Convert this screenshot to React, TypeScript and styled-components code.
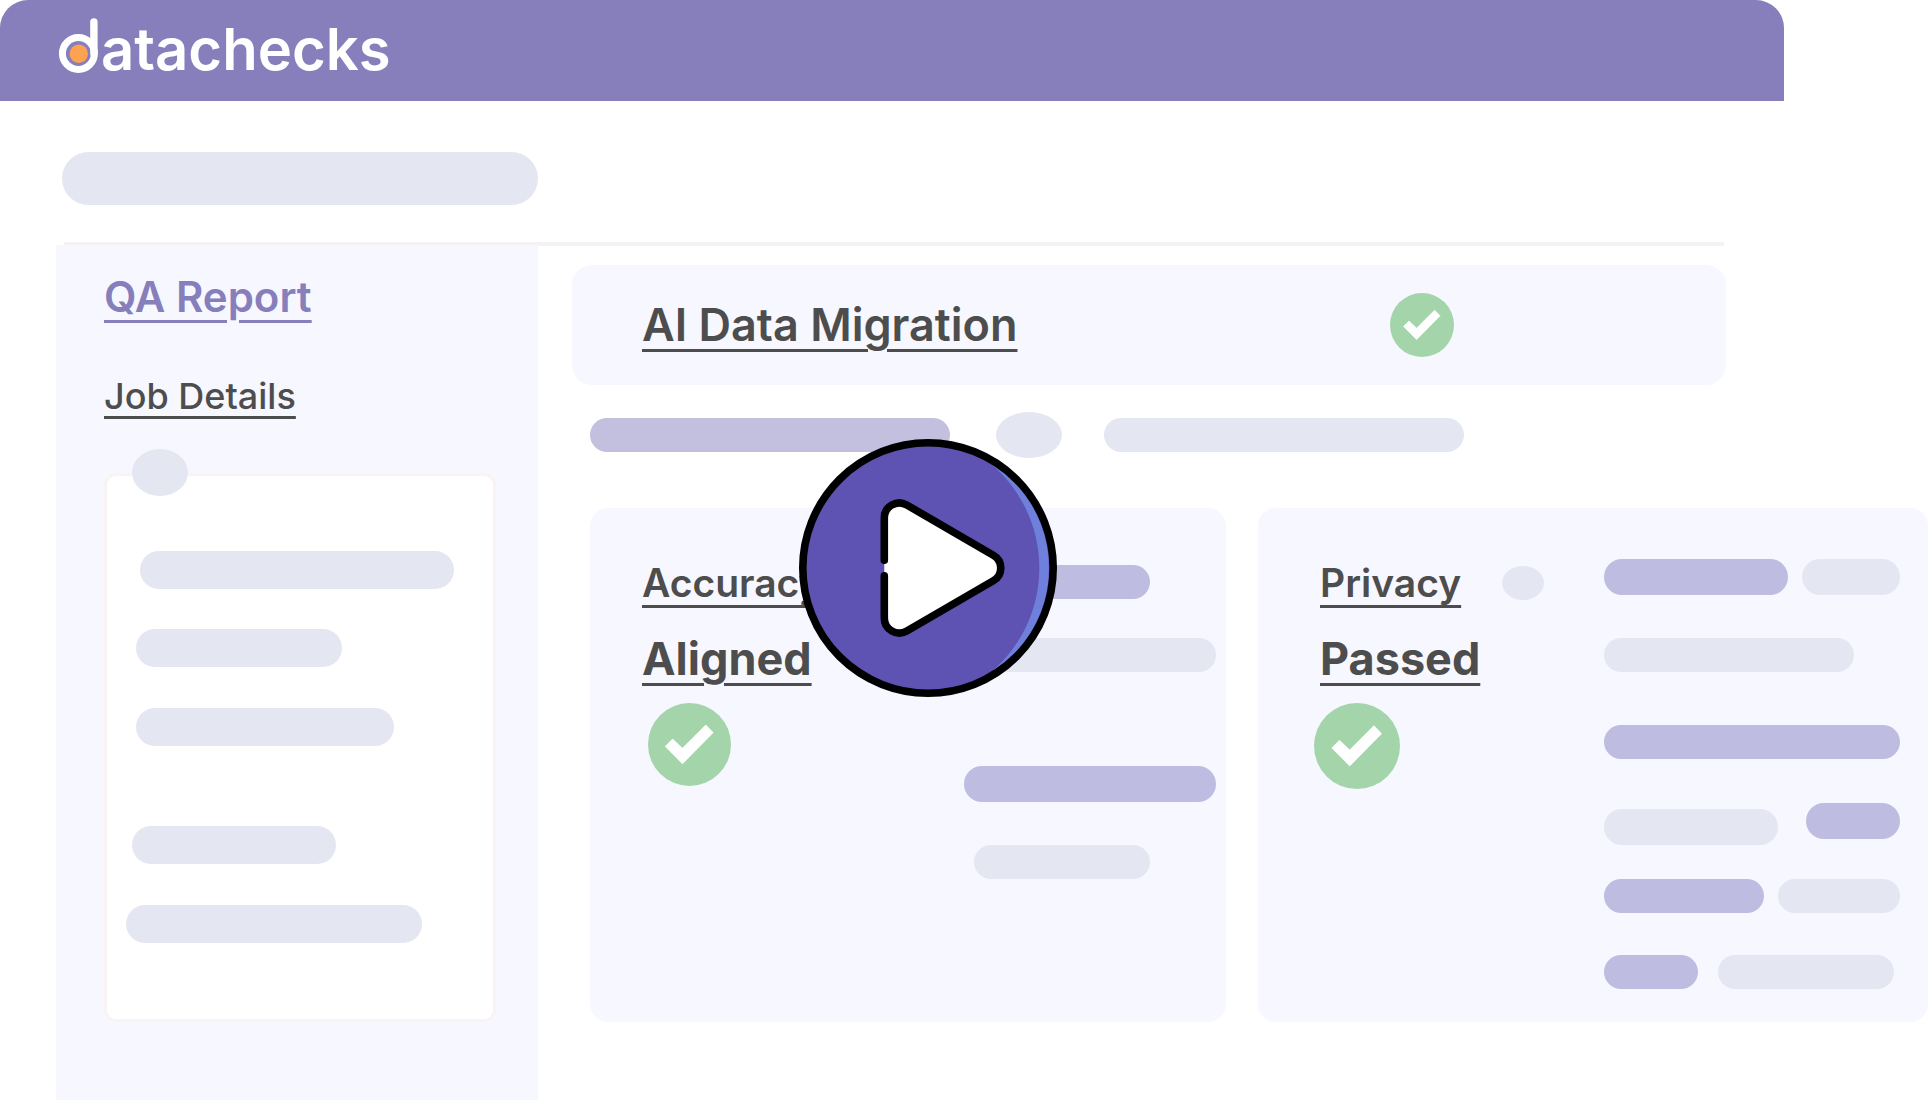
import React from "react";
import styled, { createGlobalStyle } from "styled-components";

const color = {
  brand: "#867fbc",
  ink: "#4d4d4d",
  panel: "#f7f7ff",
  mist: "#e4e6f1",
  lilac: "#bebce0",
  lavender: "#c3bfdf",
  line: "#f5f2f2",
  cardLine: "#f9f4f3",
  success: "#a4d5aa",
};

const GlobalStyle = createGlobalStyle`
  *, *::before, *::after { box-sizing: border-box; }
  html, body { margin: 0; padding: 0; background: #ffffff; }
  body { font-family: Inter, "Liberation Sans", sans-serif; color: ${color.ink}; }
  h1, h2, h3, p { margin: 0; }
`;

const Page = styled.div`
  min-height: 100vh;
  display: flex;
  flex-direction: column;
  padding-bottom: 2px;
`;

const TopBar = styled.header`
  display: flex;
  align-items: flex-start;
  height: 101px;
  margin-right: 144px;
  padding: 12px 58px;
  background: ${color.brand};
  border-radius: 28px 28px 0 0;
`;

const Brand = styled.a`
  display: flex;
  align-items: flex-start;
  gap: 2px;
  color: #ffffff;
  text-decoration: none;
`;

const BrandName = styled.span`
  font-size: 58px;
  font-weight: 600;
  line-height: 74px;
`;

const Toolbar = styled.div`
  margin: 0 204px 0 64px;
  padding: 51px 0 37px;
  border-bottom: 4px solid ${color.line};
`;

const SearchBar = styled.div`
  width: 476px;
  height: 53px;
  margin-left: -2px;
  border-radius: 27px;
  background: ${color.mist};
`;

const Body = styled.div`
  flex: 1;
  display: grid;
  grid-template-columns: 482px minmax(0, 1fr);
  column-gap: 34px;
  margin-top: -1px;
  padding-left: 56px;
`;

const Sidebar = styled.aside`
  display: flex;
  flex-direction: column;
  align-items: flex-start;
  padding: 26px 42px 60px 48px;
  background: ${color.panel};
`;

const SideLink = styled.a<{ $active?: boolean }>`
  color: ${(p) => (p.$active ? color.brand : color.ink)};
  font-size: ${(p) => (p.$active ? 42 : 36)}px;
  font-weight: ${(p) => (p.$active ? 600 : 500)};
  line-height: ${(p) => (p.$active ? 52 : 44)}px;
  text-decoration: underline;
  text-decoration-thickness: 3px;
  text-underline-offset: ${(p) => (p.$active ? 8 : 7)}px;
  & + & {
    margin-top: 51px;
  }
`;

const DetailsBox = styled.section`
  position: relative;
  align-self: stretch;
  margin-top: 55px;
  padding: 75px 19px 76px;
  border: 3px solid ${color.cardLine};
  border-radius: 12px;
  background: #ffffff;
`;

const Dot = styled.span<{ $w: number; $h: number }>`
  flex: none;
  width: ${(p) => p.$w}px;
  height: ${(p) => p.$h}px;
  border-radius: 50%;
  background: ${color.mist};
`;

const CornerDot = styled(Dot)`
  position: absolute;
  top: -27px;
  left: 25px;
`;

type BarProps = { $w: number; $h?: number; $tone?: string; $indent?: number; $top?: number };

const Bar = styled.div<BarProps>`
  flex: none;
  width: ${(p) => p.$w}px;
  height: ${(p) => p.$h ?? 34}px;
  margin-left: ${(p) => p.$indent ?? 0}px;
  margin-top: ${(p) => p.$top ?? 0}px;
  border-radius: 19px;
  background: ${(p) => p.$tone ?? color.mist};
`;

const Main = styled.main`
  padding-top: 20px;
`;

const TitleCard = styled.section`
  display: flex;
  align-items: center;
  justify-content: space-between;
  height: 120px;
  margin-right: 202px;
  padding: 0 272px 0 70px;
  border-radius: 20px;
  background: ${color.panel};
`;

const Heading = styled.h2<{ $size: number; $weight?: number }>`
  font-size: ${(p) => p.$size}px;
  font-weight: ${(p) => p.$weight ?? 600};
  line-height: ${(p) => (p.$size > 40 ? 56 : 48)}px;
  text-decoration: underline;
  text-decoration-thickness: 3px;
  text-underline-offset: 8px;
  white-space: nowrap;
`;

const Filters = styled.div`
  display: flex;
  align-items: center;
  height: 48px;
  margin: 26px 0 0 18px;
`;

const FilterDot = styled(Dot)`
  margin: 0 42px 0 46px;
`;

const Cards = styled.div`
  display: grid;
  grid-template-columns: minmax(0, 636fr) minmax(0, 670fr);
  column-gap: 32px;
  margin: 49px 0 60px 18px;
`;

const Card = styled.section<{ $left: number; $right: number }>`
  position: relative;
  display: flex;
  justify-content: space-between;
  min-height: 514px;
  padding: 51px ${(p) => p.$right}px 24px ${(p) => p.$left}px;
  border-radius: 18px;
  background: ${color.panel};
`;

const Summary = styled.div<{ $shift: number }>`
  display: flex;
  flex-direction: column;
  align-items: flex-start;
  row-gap: 24px;
  padding-left: ${(p) => p.$shift}px;
`;

const SummaryRow = styled.div`
  display: flex;
  align-items: center;
  column-gap: 41px;
`;

const Status = styled.div<{ $indent: number }>`
  display: flex;
  flex-direction: column;
  align-items: flex-start;
  row-gap: 16px;
  svg {
    margin-left: ${(p) => p.$indent}px;
  }
`;

const Bars = styled.div<{ $w: number; $top?: number }>`
  flex: none;
  width: ${(p) => p.$w}px;
  padding-top: ${(p) => p.$top ?? 0}px;
`;

const BarRow = styled.div<{ $gap?: number; $top?: number }>`
  display: flex;
  align-items: flex-start;
  column-gap: ${(p) => p.$gap ?? 14}px;
  margin-top: ${(p) => p.$top ?? 0}px;
`;

const PlayButton = styled.button`
  position: absolute;
  top: -69px;
  left: 209px;
  width: 258px;
  height: 258px;
  padding: 0;
  border: 0;
  border-radius: 50%;
  background: transparent;
  cursor: pointer;
  svg {
    display: block;
  }
`;

const LogoMark = () => (
  <svg width="41" height="64" viewBox="58 12 41 64" aria-hidden="true">
    <circle cx="78.4" cy="53.5" r="16" fill="none" stroke="#fff" strokeWidth="7" />
    <path d="M93.9 22v31.5" stroke="#fff" strokeWidth="7.4" strokeLinecap="round" />
    <circle cx="78.8" cy="53.8" r="9.2" fill="#fca251" />
  </svg>
);

const Check = ({ size }: { size: number }) => (
  <svg width={size} height={size} viewBox="0 0 64 64" role="img" aria-label="Passed">
    <circle cx="32" cy="32" r="32" fill={color.success} />
    <path
      d="M13.6 33.4 19 28l7.6 7.2 18-18 5.4 5.6-23.4 23.8z"
      fill="#fff"
      stroke="#fff"
      strokeWidth="0.8"
      strokeLinejoin="round"
    />
  </svg>
);

const PlayIcon = () => (
  <svg width="258" height="258" viewBox="0 0 258 258" aria-hidden="true">
    <circle cx="129" cy="129" r="125" fill="#5e52b2" />
    <path d="M186 20A125 125 0 0 1 186 238A136.5 136.5 0 0 0 186 20z" fill="#6f80dc" />
    <circle cx="129" cy="129" r="125.2" fill="none" stroke="#000" strokeWidth="7.6" />
    <path
      d="M85.3 79a15 15 0 0 1 22.5-13L194.3 116.2a14.7 14.7 0 0 1 0 25.6L107.8 192a15 15 0 0 1-22.5-13z"
      fill="#fff"
    />
    <path
      d="M85.3 121.2V79a15 15 0 0 1 22.5-13L194.3 116.2a14.7 14.7 0 0 1 0 25.6L107.8 192a15 15 0 0 1-22.5-13V136.8"
      fill="none"
      stroke="#000"
      strokeWidth="7.6"
      strokeLinecap="round"
    />
  </svg>
);

export default function App() {
  return (
    <>
      <GlobalStyle />
      <Page>
        <TopBar>
          <Brand href="#" aria-label="datachecks">
            <LogoMark />
            <BrandName>atachecks</BrandName>
          </Brand>
        </TopBar>

        <Toolbar>
          <SearchBar />
        </Toolbar>

        <Body>
          <Sidebar>
            <SideLink href="#report" $active>
              QA Report
            </SideLink>
            <SideLink href="#details">Job Details</SideLink>
            <DetailsBox>
              <CornerDot $w={56} $h={47} />
              <Bar $w={314} $h={38} $indent={14} />
              <Bar $w={206} $h={38} $indent={10} $top={40} />
              <Bar $w={258} $h={38} $indent={10} $top={41} />
              <Bar $w={204} $h={38} $indent={6} $top={80} />
              <Bar $w={296} $h={38} $top={41} />
            </DetailsBox>
          </Sidebar>

          <Main>
            <TitleCard>
              <Heading as="h1" $size={45}>
                AI Data Migration
              </Heading>
              <Check size={64} />
            </TitleCard>

            <Filters>
              <Bar $w={360} $tone={color.lavender} />
              <FilterDot $w={66} $h={46} />
              <Bar $w={360} />
            </Filters>

            <Cards>
              <Card $left={52} $right={10}>
                <Summary $shift={0}>
                  <Heading $size={39}>Accuracy</Heading>
                  <Status $indent={6}>
                    <Heading as="h3" $size={45} $weight={700}>
                      Aligned
                    </Heading>
                    <Check size={83} />
                  </Status>
                </Summary>
                <Bars $w={252} $top={6}>
                  <Bar $w={176} $tone={color.lilac} $indent={10} />
                  <Bar $w={252} $top={39} />
                  <Bar $w={252} $h={36} $tone={color.lilac} $top={94} />
                  <Bar $w={176} $indent={10} $top={43} />
                </Bars>
                <PlayButton type="button" aria-label="Play video">
                  <PlayIcon />
                </PlayButton>
              </Card>

              <Card $left={56} $right={28}>
                <Summary $shift={6}>
                  <SummaryRow>
                    <Heading $size={39}>Privacy</Heading>
                    <Dot $w={42} $h={34} />
                  </SummaryRow>
                  <Status $indent={-6}>
                    <Heading as="h3" $size={45} $weight={700}>
                      Passed
                    </Heading>
                    <Check size={86} />
                  </Status>
                </Summary>
                <Bars $w={296}>
                  <BarRow>
                    <Bar $w={184} $h={36} $tone={color.lilac} />
                    <Bar $w={98} $h={36} />
                  </BarRow>
                  <BarRow $top={43}>
                    <Bar $w={250} />
                  </BarRow>
                  <BarRow $top={53}>
                    <Bar $w={296} $tone={color.lilac} />
                  </BarRow>
                  <BarRow $top={44} $gap={28}>
                    <Bar $w={174} $h={36} $top={6} />
                    <Bar $w={94} $h={36} $tone={color.lilac} />
                  </BarRow>
                  <BarRow $top={34}>
                    <Bar $w={160} $tone={color.lilac} />
                    <Bar $w={122} />
                  </BarRow>
                  <BarRow $top={42} $gap={20}>
                    <Bar $w={94} $tone={color.lilac} />
                    <Bar $w={176} />
                  </BarRow>
                </Bars>
              </Card>
            </Cards>
          </Main>
        </Body>
      </Page>
    </>
  );
}
